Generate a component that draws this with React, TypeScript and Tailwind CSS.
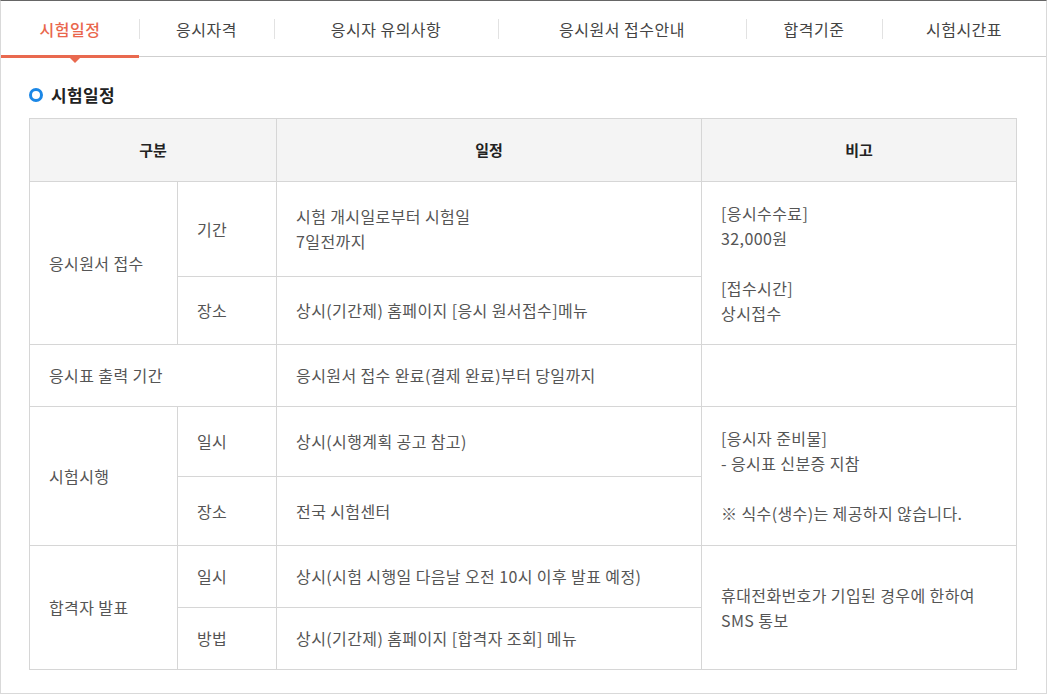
const tabs = [
  { label: "시험일정", w: "w-[138px]", active: true },
  { label: "응시자격", w: "w-[135px]" },
  { label: "응시자 유의사항", w: "w-[224px]" },
  { label: "응시원서 접수안내", w: "w-[248px]" },
  { label: "합격기준", w: "w-[136px]" },
  { label: "시험시간표", w: "flex-1" },
];

const td = "border border-[#d6d6d6] align-middle px-[19px] text-[16px] tracking-[0.4px] leading-[25px] text-[#555]";

export default function App() {
  return (
    <div
      className="w-[1047px] h-[694px] border border-[#d9d9d9] border-t-[#666] bg-white"
      style={{ fontFamily: '"Noto Sans CJK KR", "Noto Sans", sans-serif' }}
    >
      {/* 탭 */}
      <div className="flex h-[56px] border-b border-[#cfcfcf]">
        {tabs.map((t, i) => (
          <div key={t.label} className={`relative flex items-center justify-center ${t.w}`}>
            {i > 0 && <span className="absolute left-0 top-[18px] h-[20px] w-px bg-[#e2e2e2]" />}
            <span className={`text-[16px] tracking-[0.5px] ${t.active ? "text-[#e9664c] font-medium" : "text-[#444]"}`}>{t.label}</span>
            {t.active && (
              <>
                <span className="absolute left-0 right-0 bottom-[-2px] h-[3px] bg-[#e9694f]" />
                <span className="absolute left-[69px] bottom-[-7px] w-0 h-0 border-l-[5px] border-r-[5px] border-t-[5px] border-l-transparent border-r-transparent border-t-[#e9694f]" />
              </>
            )}
          </div>
        ))}
      </div>

      <div className="px-[28px] pt-[26px]">
        <h2 className="flex items-center gap-[8px] text-[17px] font-bold tracking-[0.4px] text-[#222] leading-[24px]">
          <span className="inline-block w-[14px] h-[14px] rounded-full border-[3.5px] border-[#1b87e6]" />
          시험일정
        </h2>

        <table className="mt-[11px] w-[987px] table-fixed border-collapse">
          <colgroup>
            <col className="w-[148px]" />
            <col className="w-[99px]" />
            <col className="w-[425px]" />
            <col className="w-[315px]" />
          </colgroup>
          <thead>
            <tr className="h-[63px] bg-[#f4f4f4]">
              <th colSpan={2} className="border border-[#d6d6d6] text-[15px] font-bold text-[#222]">구분</th>
              <th className="border border-[#d6d6d6] text-[15px] font-bold text-[#222]">일정</th>
              <th className="border border-[#d6d6d6] text-[15px] font-bold text-[#222]">비고</th>
            </tr>
          </thead>
          <tbody>
            <tr className="h-[95px]">
              <td rowSpan={2} className={td}>응시원서 접수</td>
              <td className={td}>기간</td>
              <td className={td}>시험 개시일로부터 시험일<br />7일전까지</td>
              <td rowSpan={2} className={td}>
                [응시수수료]<br />32,000원<br /><br />[접수시간]<br />상시접수
              </td>
            </tr>
            <tr className="h-[68px]">
              <td className={td}>장소</td>
              <td className={td}>상시(기간제) 홈페이지 [응시 원서접수]메뉴</td>
            </tr>
            <tr className="h-[62px]">
              <td colSpan={2} className={td}>응시표 출력 기간</td>
              <td className={td}>응시원서 접수 완료(결제 완료)부터 당일까지</td>
              <td className={td}></td>
            </tr>
            <tr className="h-[70px]">
              <td rowSpan={2} className={td}>시험시행</td>
              <td className={td}>일시</td>
              <td className={td}>상시(시행계획 공고 참고)</td>
              <td rowSpan={2} className={td}>
                [응시자 준비물]<br />- 응시표 신분증 지참<br /><br />※ 식수(생수)는 제공하지 않습니다.
              </td>
            </tr>
            <tr className="h-[69px]">
              <td className={td}>장소</td>
              <td className={td}>전국 시험센터</td>
            </tr>
            <tr className="h-[62px]">
              <td rowSpan={2} className={td}>합격자 발표</td>
              <td className={td}>일시</td>
              <td className={td}>상시(시험 시행일 다음날 오전 10시 이후 발표 예정)</td>
              <td rowSpan={2} className={td}>
                휴대전화번호가 기입된 경우에 한하여<br />SMS 통보
              </td>
            </tr>
            <tr className="h-[62px]">
              <td className={td}>방법</td>
              <td className={td}>상시(기간제) 홈페이지 [합격자 조회] 메뉴</td>
            </tr>
          </tbody>
        </table>
      </div>
    </div>
  );
}
